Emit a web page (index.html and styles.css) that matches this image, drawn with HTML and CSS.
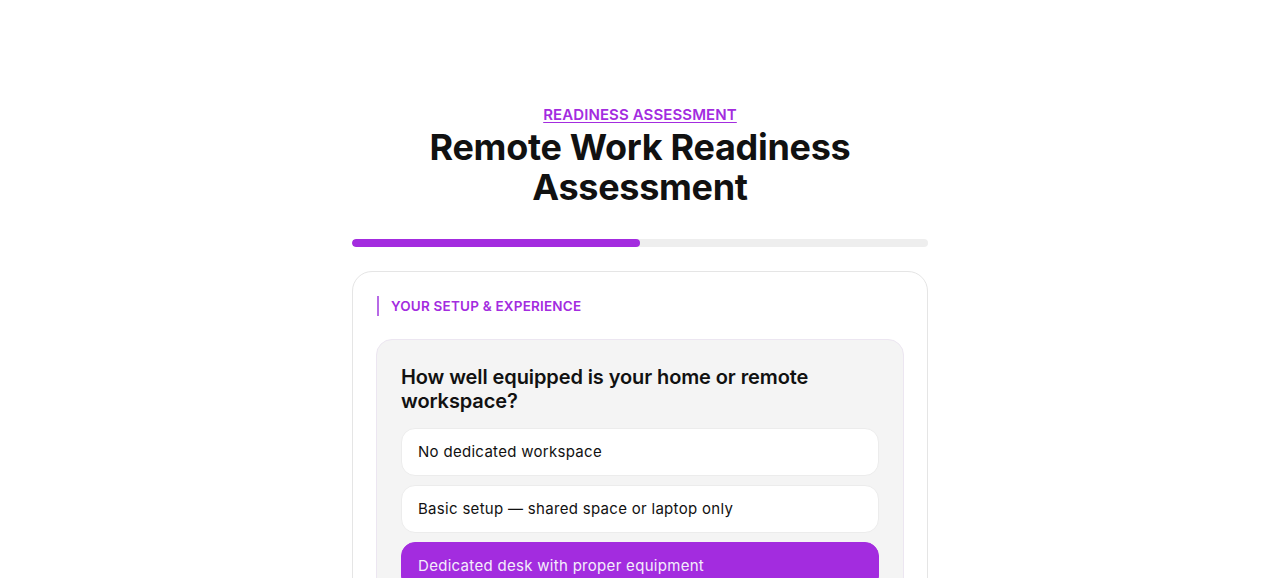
FILE: index.html
```html
<!DOCTYPE html>
<html lang="en">
<head>
<meta charset="utf-8">
<title>Remote Work Readiness Assessment</title>
<link rel="stylesheet" href="styles.css">
</head>
<body>
<main class="page">
  <header class="hero">
    <a class="eyebrow" href="#">READINESS ASSESSMENT</a>
    <h1 class="title">Remote Work Readiness Assessment</h1>
  </header>
  <div class="progress"><div class="progress-fill" style="width:50%"></div></div>
  <section class="card">
    <div class="section-label">YOUR SETUP &amp; EXPERIENCE</div>
    <div class="question">
      <h2 class="question-text">How well equipped is your home or remote workspace?</h2>
      <div class="options">
        <button class="option">No dedicated workspace</button>
        <button class="option">Basic setup — shared space or laptop only</button>
        <button class="option option-selected">Dedicated desk with proper equipment</button>
        <button class="option">Fully equipped home office</button>
      </div>
    </div>
  </section>
</main>
</body>
</html>
```

FILE: styles.css
```css
* { box-sizing: border-box; }
html, body { margin: 0; padding: 0; background: #ffffff; }
body {
  font-family: Inter, "Liberation Sans", sans-serif;
  color: #111111;
}
.page {
  width: 576px;
  margin: 0 auto;
  padding-top: 105px;
}
.hero {
  display: flex;
  flex-direction: column;
  align-items: center;
  text-align: center;
}
.eyebrow {
  color: #a32cdf;
  font-size: 15px;
  font-weight: 600;
  line-height: 20px;
  text-decoration: underline;
  text-underline-offset: 2px;
  letter-spacing: 0.1px;
}
.title {
  margin: 2px 0 0;
  font-size: 36px;
  font-weight: 700;
  line-height: 40px;
  letter-spacing: -0.3px;
  color: #111111;
  max-width: 460px;
}
.progress {
  margin-top: 32px;
  height: 8px;
  border-radius: 4px;
  background: #eeeeee;
  overflow: hidden;
}
.progress-fill {
  height: 100%;
  background: #a32cdf;
  border-radius: 4px;
}
.card {
  margin-top: 24px;
  border: 1px solid #e5e5e5;
  border-radius: 20px;
  padding: 24px 23px;
}
.section-label {
  margin-left: 1px;
  border-left: 2px solid #b76ae6;
  padding-left: 12px;
  color: #a32cdf;
  font-size: 13.5px;
  font-weight: 600;
  line-height: 20px;
  letter-spacing: 0.2px;
}
.question {
  margin-top: 23px;
  background: #f4f4f4;
  border: 1px solid #ece6f1;
  border-radius: 16px;
  padding: 25px 24px 24px;
}
.question-text {
  margin: 0 0 15px;
  font-size: 20px;
  font-weight: 600;
  line-height: 24px;
  letter-spacing: -0.1px;
  color: #111111;
}
.options {
  display: flex;
  flex-direction: column;
  gap: 9px;
}
.option {
  display: block;
  width: 100%;
  text-align: left;
  height: 48px;
  padding: 0 16px 1px 16px;
  background: #ffffff;
  border: 1px solid #ececec;
  border-radius: 14px;
  font-family: inherit;
  font-size: 15px;
  letter-spacing: 0.3px;
  color: #111111;
  cursor: pointer;
}
.option-selected {
  background: #a32cdf;
  border-color: #a32cdf;
  color: #f4ecfb;
}
```
